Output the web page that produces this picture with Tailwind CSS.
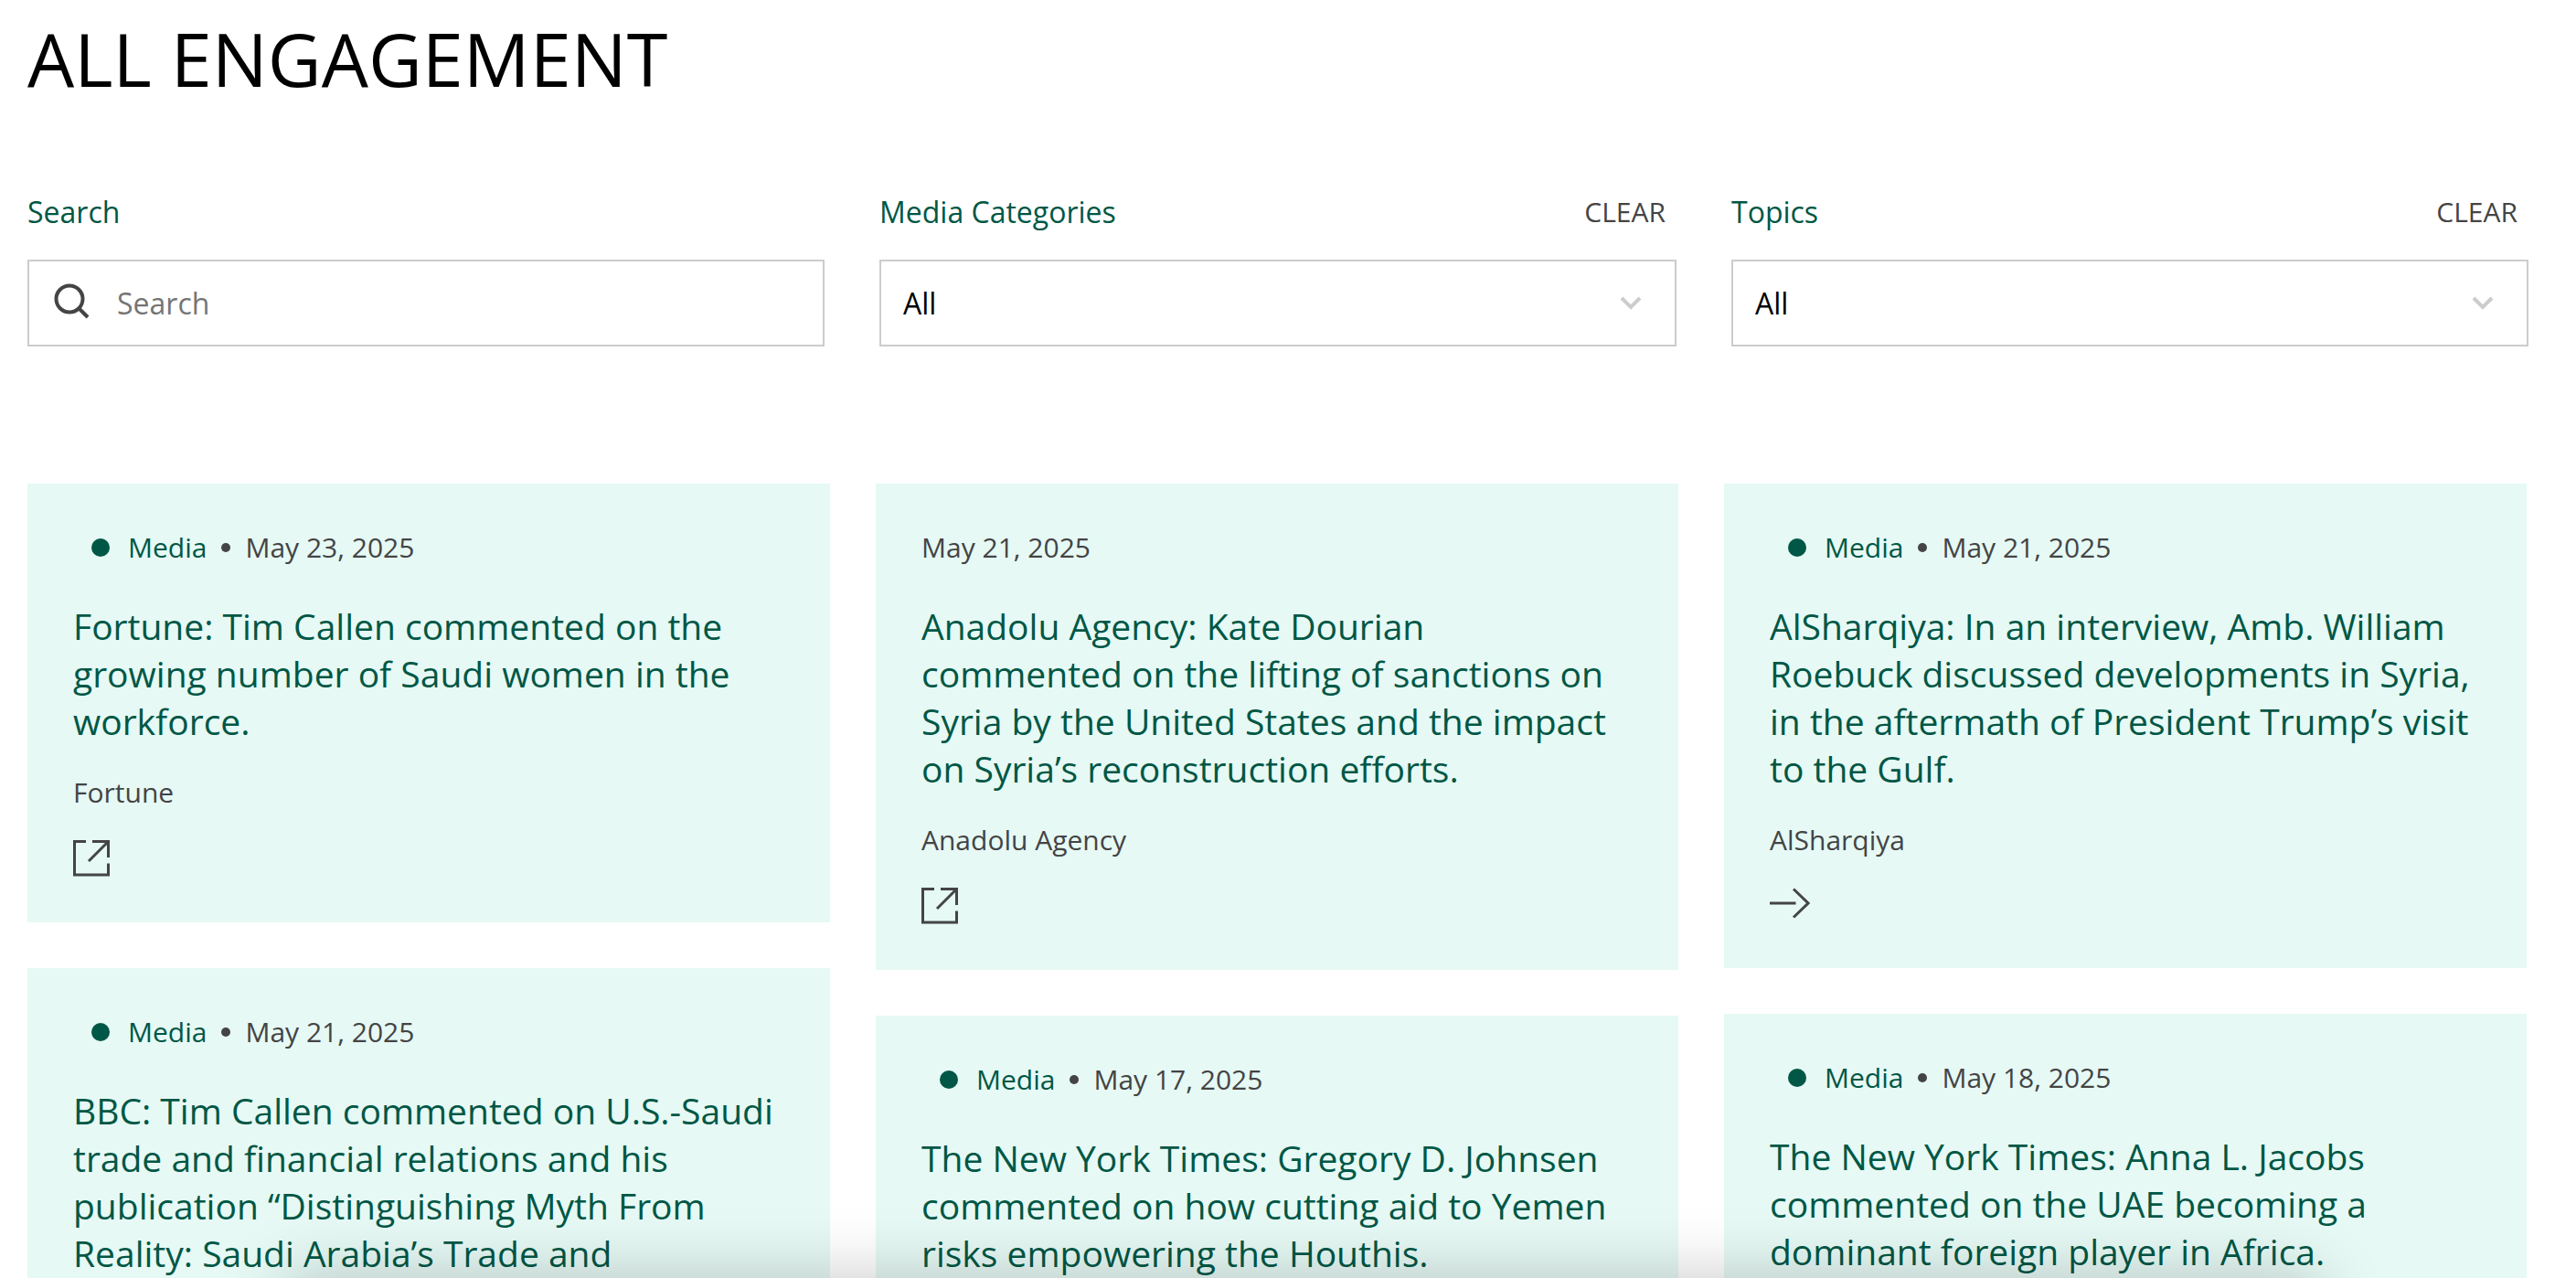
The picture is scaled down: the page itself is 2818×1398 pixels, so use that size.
<!DOCTYPE html>
<html lang="en">
  <head>
    <meta charset="UTF-8" />
    <meta name="viewport" content="width=device-width, initial-scale=1.0" />
    <title>All Engagement</title>
    <script src="https://cdn.jsdelivr.net/npm/@tailwindcss/browser@4"></script>
  </head>

  <body class="h-screen overflow-hidden bg-white font-['Open_Sans',sans-serif] text-[#444444]">
    <main class="pl-[30px] pr-[52px] pt-2">
      <h1 class="text-[81px] leading-[112px] text-black">ALL ENGAGEMENT</h1>

      <!-- Filters -->
      <form class="grid grid-cols-3 gap-[60px] pt-[92px]">
        <div>
          <div class="flex h-10 items-center">
            <label for="search" class="text-[32px] leading-10 text-[#005745]">Search</label>
          </div>
          <div class="relative mt-8">
            <svg class="absolute left-7 top-6 size-11 text-[#444444]" viewBox="0 0 44 44" fill="none" stroke="currentColor" stroke-width="4">
              <circle cx="18" cy="19" r="14.5" />
              <path d="M28.5 29.5 38 39" />
            </svg>
            <input
              id="search"
              type="text"
              placeholder="Search"
              class="h-[95px] w-full border-2 border-[#cccccc] bg-white pl-24 pr-6 text-[32px] text-black placeholder:text-[#757575]"
            />
          </div>
        </div>

        <div>
          <div class="flex h-10 items-center justify-between">
            <label for="categories" class="text-[32px] leading-10 text-[#005745]">Media Categories</label>
            <button type="button" class="px-3 text-[30px] leading-10">CLEAR</button>
          </div>
          <div class="relative mt-8">
            <select
              id="categories"
              class="h-[95px] w-full appearance-none border-2 border-[#cccccc] bg-white px-6 text-[32px] text-black"
            >
              <option>All</option>
            </select>
            <svg class="pointer-events-none absolute right-[38px] top-10 h-4 w-6 text-[#cccccc]" viewBox="0 0 24 16" fill="none" stroke="currentColor" stroke-width="4">
              <path d="m2 2 10 10L22 2" />
            </svg>
          </div>
        </div>

        <div>
          <div class="flex h-10 items-center justify-between">
            <label for="topics" class="text-[32px] leading-10 text-[#005745]">Topics</label>
            <button type="button" class="px-3 text-[30px] leading-10">CLEAR</button>
          </div>
          <div class="relative mt-8">
            <select
              id="topics"
              class="h-[95px] w-full appearance-none border-2 border-[#cccccc] bg-white px-6 text-[32px] text-black"
            >
              <option>All</option>
            </select>
            <svg class="pointer-events-none absolute right-[38px] top-10 h-4 w-6 text-[#cccccc]" viewBox="0 0 24 16" fill="none" stroke="currentColor" stroke-width="4">
              <path d="m2 2 10 10L22 2" />
            </svg>
          </div>
        </div>
      </form>

      <!-- Cards -->
      <section class="mr-0.5 mt-[150px] grid grid-cols-3 items-start gap-[50px]">
        <div class="flex flex-col gap-[50px]">
          <article class="bg-[#e6f9f5] p-[50px]">
            <div class="flex h-10 items-center text-[30px] leading-10">
              <span class="ml-5 size-5 rounded-full bg-[#005745]"></span>
              <a href="#" class="ml-5 text-[#005745]">Media</a>
              <span class="mx-4 size-2.5 rounded-full bg-[#444444]"></span>
              <time datetime="2025-05-23">May 23, 2025</time>
            </div>
            <h2 class="mt-10 text-[39px] leading-[52px] text-[#005745]">
              <a href="#">Fortune: Tim Callen commented on the growing number of Saudi women in the workforce.</a>
            </h2>
            <p class="mt-8 text-[30px] leading-10">Fortune</p>
            <a href="#" aria-label="Open Fortune" class="mt-8 block w-10">
              <svg class="size-10" viewBox="0 0 40 40" fill="none" stroke="currentColor" stroke-width="3">
                <path d="M14 1.500H1.500V38H38.500V25.500M21 1.500H38.500V19M38 2 17 23" />
              </svg>
            </a>
          </article>

          <article class="bg-[#e6f9f5] p-[50px]">
            <div class="flex h-10 items-center text-[30px] leading-10">
              <span class="ml-5 size-5 rounded-full bg-[#005745]"></span>
              <a href="#" class="ml-5 text-[#005745]">Media</a>
              <span class="mx-4 size-2.5 rounded-full bg-[#444444]"></span>
              <time datetime="2025-05-21">May 21, 2025</time>
            </div>
            <h2 class="mt-10 text-[39px] leading-[52px] text-[#005745]">
              <a href="#">BBC: Tim Callen commented on U.S.-Saudi trade and financial relations and his publication “Distinguishing Myth From Reality: Saudi Arabia’s Trade and</a>
            </h2>
          </article>
        </div>

        <div class="flex flex-col gap-[50px]">
          <article class="bg-[#e6f9f5] p-[50px]">
            <div class="flex h-10 items-center text-[30px] leading-10">
              <time datetime="2025-05-21">May 21, 2025</time>
            </div>
            <h2 class="mt-10 text-[39px] leading-[52px] text-[#005745]">
              <a href="#">Anadolu Agency: Kate Dourian commented on the lifting of sanctions on Syria by the United States and the impact on Syria’s reconstruction efforts.</a>
            </h2>
            <p class="mt-8 text-[30px] leading-10">Anadolu Agency</p>
            <a href="#" aria-label="Open Anadolu Agency" class="mt-8 block w-10">
              <svg class="size-10" viewBox="0 0 40 40" fill="none" stroke="currentColor" stroke-width="3">
                <path d="M14 1.500H1.500V38H38.500V25.500M21 1.500H38.500V19M38 2 17 23" />
              </svg>
            </a>
          </article>

          <article class="bg-[#e6f9f5] p-[50px]">
            <div class="flex h-10 items-center text-[30px] leading-10">
              <span class="ml-5 size-5 rounded-full bg-[#005745]"></span>
              <a href="#" class="ml-5 text-[#005745]">Media</a>
              <span class="mx-4 size-2.5 rounded-full bg-[#444444]"></span>
              <time datetime="2025-05-17">May 17, 2025</time>
            </div>
            <h2 class="mt-10 text-[39px] leading-[52px] text-[#005745]">
              <a href="#">The New York Times: Gregory D. Johnsen commented on how cutting aid to Yemen risks empowering the Houthis.</a>
            </h2>
          </article>
        </div>

        <div class="flex flex-col gap-[50px]">
          <article class="bg-[#e6f9f5] p-[50px]">
            <div class="flex h-10 items-center text-[30px] leading-10">
              <span class="ml-5 size-5 rounded-full bg-[#005745]"></span>
              <a href="#" class="ml-5 text-[#005745]">Media</a>
              <span class="mx-4 size-2.5 rounded-full bg-[#444444]"></span>
              <time datetime="2025-05-21">May 21, 2025</time>
            </div>
            <h2 class="mt-10 text-[39px] leading-[52px] text-[#005745]">
              <a href="#">AlSharqiya: In an interview, Amb. William Roebuck discussed developments in Syria, in the aftermath of President Trump’s visit to the Gulf.</a>
            </h2>
            <p class="mt-8 text-[30px] leading-10">AlSharqiya</p>
            <a href="#" aria-label="Read AlSharqiya" class="mt-8 block w-11">
              <svg class="h-[38px] w-11" viewBox="0 0 44 38" fill="none" stroke="currentColor" stroke-width="3">
                <path d="M0 17H28.500M26 1.500 42 17 26 32.500" />
              </svg>
            </a>
          </article>

          <article class="bg-[#e6f9f5] p-[50px]">
            <div class="flex h-10 items-center text-[30px] leading-10">
              <span class="ml-5 size-5 rounded-full bg-[#005745]"></span>
              <a href="#" class="ml-5 text-[#005745]">Media</a>
              <span class="mx-4 size-2.5 rounded-full bg-[#444444]"></span>
              <time datetime="2025-05-18">May 18, 2025</time>
            </div>
            <h2 class="mt-10 text-[39px] leading-[52px] text-[#005745]">
              <a href="#">The New York Times: Anna L. Jacobs commented on the UAE becoming a dominant foreign player in Africa.</a>
            </h2>
          </article>
        </div>
      </section>
    </main>

    <!-- Drawer parked below the fold, only its shadow shows -->
    <div class="pointer-events-none fixed left-[11%] right-[10%] top-full h-60 shadow-[0_0_70px_rgba(0,0,0,0.22)]"></div>
  </body>
</html>
